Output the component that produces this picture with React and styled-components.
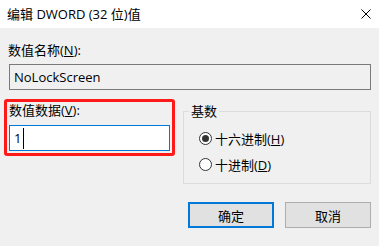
import React from 'react';
import styled, { createGlobalStyle } from 'styled-components';

const GlobalStyle = createGlobalStyle`
  html, body {
    margin: 0;
    padding: 0;
    background: #f0f0f0;
  }
  body {
    font-family: "Open Sans", "Noto Sans CJK SC", sans-serif;
    font-size: 13px;
    color: #000;
  }
`;

const Dialog = styled.div`
  width: 379px;
  height: 246px;
  background: #f0f0f0;
  display: flex;
  flex-direction: column;
  overflow: hidden;
`;

const TitleBar = styled.div`
  height: 28px;
  box-sizing: border-box;
  background: #fff;
  display: flex;
  align-items: center;
  justify-content: space-between;
  padding: 0 7px 1px 7px;
`;

const Title = styled.span`
  line-height: 16px;
`;

const CloseButton = styled.span`
  display: flex;
  margin-right: 1px;
`;

const Body = styled.div`
  padding: 14px 8px 0 8px;
  display: flex;
  flex-direction: column;
`;

const FieldLabel = styled.div`
  line-height: 16px;
  margin-bottom: ${props => props.$gap || 6}px;
`;

const TextBox = styled.div`
  box-sizing: border-box;
  width: ${props => props.$width}px;
  height: 26px;
  margin-left: ${props => props.$indent || 0}px;
  display: flex;
  align-items: center;
  padding-left: 4px;
  border: 1px solid ${props => props.$focused ? '#0078d7' : '#7a7a7a'};
  background: ${props => props.$readOnly ? '#f0f0f0' : '#fff'};
`;

const Caret = styled.span`
  display: inline-block;
  width: 1px;
  height: 21px;
  margin-left: 2px;
  background: #000;
`;

const Row = styled.div`
  display: flex;
  align-items: flex-start;
  margin-top: 9px;
`;

const Highlight = styled.div`
  box-sizing: border-box;
  width: 171px;
  margin-left: -4px;
  padding: 0 2px 2px 2px;
  border: 3px solid #ff1a1a;
  border-radius: 3px;
`;

const GroupBox = styled.fieldset`
  box-sizing: border-box;
  width: 189px;
  min-width: 0;
  margin: 4px 0 0 8px;
  padding: 9px 0 9px 15px;
  border: 1px solid #dcdcdc;
  display: flex;
  flex-direction: column;
  gap: 6px;
`;

const GroupTitle = styled.legend`
  margin-left: -10px;
  padding: 0 2px;
  line-height: 16px;
`;

const RadioRow = styled.label`
  display: flex;
  align-items: center;
  gap: 3px;
  height: 20px;
`;

const RadioCircle = styled.span`
  box-sizing: border-box;
  width: 13px;
  height: 13px;
  border: 1px solid #333;
  border-radius: 50%;
  background: #fff;
  display: flex;
  align-items: center;
  justify-content: center;

  &::after {
    content: '';
    display: ${props => props.$checked ? 'block' : 'none'};
    width: 7px;
    height: 7px;
    border-radius: 50%;
    background: #333;
  }
`;

const ButtonRow = styled.div`
  display: flex;
  justify-content: flex-end;
  gap: 11px;
  margin-top: 18px;
`;

const Button = styled.button`
  box-sizing: border-box;
  width: 86px;
  height: 26px;
  padding: 0;
  font: inherit;
  color: #000;
  background: #e1e1e1;
  border: ${props => props.$default ? '2px solid #0078d7' : '1px solid #adadad'};
`;

const Radio = ({ checked, children }) => (
  <RadioRow>
    <RadioCircle $checked={checked} />
    <span>{children}</span>
  </RadioRow>
);

const App = () => {
  return (
    <Dialog>
      <GlobalStyle />
      <TitleBar>
        <Title>编辑 DWORD (32 位)值</Title>
        <CloseButton>
          <svg width="10" height="10" viewBox="0 0 10 10">
            <path d="M0.5 0.5 L9.5 9.5 M9.5 0.5 L0.5 9.5" stroke="#000" strokeWidth="1" />
          </svg>
        </CloseButton>
      </TitleBar>
      <Body>
        <FieldLabel>数值名称(<u>N</u>):</FieldLabel>
        <TextBox $width={362} $indent={1} $readOnly>NoLockScreen</TextBox>
        <Row>
          <Highlight>
            <FieldLabel $gap={7}>数值数据(<u>V</u>):</FieldLabel>
            <TextBox $width={161} $focused>
              1<Caret />
            </TextBox>
          </Highlight>
          <GroupBox>
            <GroupTitle>基数</GroupTitle>
            <Radio checked>十六进制(<u>H</u>)</Radio>
            <Radio>十进制(<u>D</u>)</Radio>
          </GroupBox>
        </Row>
        <ButtonRow>
          <Button $default>确定</Button>
          <Button>取消</Button>
        </ButtonRow>
      </Body>
    </Dialog>
  );
};

export default App;
